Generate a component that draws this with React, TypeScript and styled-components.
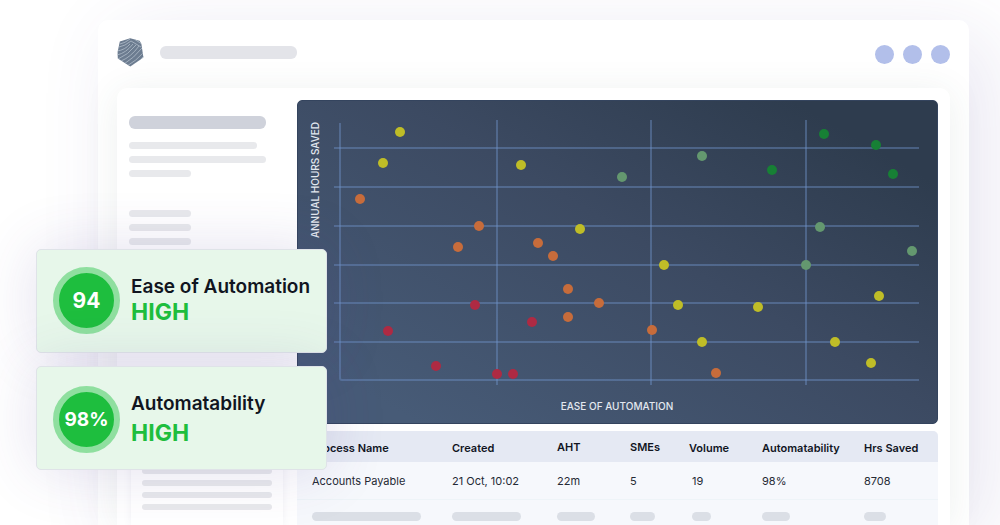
import React from "react";
import styled, { createGlobalStyle } from "styled-components";

const GlobalStyle = createGlobalStyle`
  *, *::before, *::after { box-sizing: border-box; }
  html, body, #root { height: 100%; }
  body {
    margin: 0;
    overflow: hidden;
    background: #ffffff;
    color: #11151f;
    font-family: Inter, "Liberation Sans", sans-serif;
  }
`;

const Page = styled.div`
  position: relative;
  display: flex;
  height: 100%;
  padding: 20px 31px 0 98px;
  overflow: hidden;
`;

const Window = styled.main`
  display: flex;
  flex: 1;
  flex-direction: column;
  min-width: 0;
  padding: 0 19px;
  border-radius: 10px 10px 0 0;
  background: #ffffff;
  box-shadow: 20px 16px 80px rgba(85, 70, 155, 0.13);
`;

const TopBar = styled.header`
  display: flex;
  flex: none;
  align-items: center;
  gap: 16px;
  height: 68px;
  padding-bottom: 4px;
`;

const Dots = styled.div`
  display: flex;
  gap: 9px;
  margin-left: auto;
  padding-top: 4px;
`;

const Dot = styled.span`
  width: 19px;
  height: 19px;
  border-radius: 50%;
  background: #b2bfea;
`;

const Bar = styled.span<{ $w: number; $h?: number; $tone?: string }>`
  display: block;
  flex: none;
  width: ${(p) => p.$w}px;
  max-width: 100%;
  height: ${(p) => p.$h ?? 7}px;
  border-radius: 6px;
  background: ${(p) => p.$tone ?? "#e8e9ec"};
`;

const Panel = styled.section`
  display: flex;
  flex: 1;
  min-height: 0;
  padding: 12px 12px 0;
  border-radius: 10px 10px 0 0;
  background: #ffffff;
  box-shadow: 0 4px 36px rgba(60, 90, 80, 0.09);
`;

const Sidebar = styled.aside`
  display: flex;
  flex: none;
  flex-direction: column;
  width: 168px;
  padding-top: 16px;
`;

const BarGroup = styled.div`
  display: flex;
  flex-direction: column;
  gap: 7px;
  margin-top: 13px;

  & + & { margin-top: 33px; }
`;

const NoteCard = styled.div`
  display: flex;
  flex: none;
  flex-direction: column;
  gap: 6px;
  width: 152px;
  height: 109px;
  margin: auto 0 0 2px;
  padding: 52px 11px 0;
  background: #ffffff;
  box-shadow: 0 0 8px rgba(80, 75, 130, 0.08);
`;

const Content = styled.div`
  display: flex;
  flex: 1;
  flex-direction: column;
  gap: 7px;
  min-width: 0;
`;

const ChartBox = styled.figure`
  flex: none;
  margin: 0;
  overflow: hidden;
  border: 1px solid #34445e;
  border-radius: 5px;
  background: linear-gradient(30deg, #475b77 10%, #3c4a62 55%, #2e3c4e 88%);

  svg { display: block; width: 100%; height: auto; }
`;

const AxisLabel = styled.text`
  fill: #e3e8f0;
  font-size: 10px;
  font-weight: 500;
  text-anchor: middle;
`;

const Table = styled.table`
  width: 100%;
  border-collapse: collapse;
  border-radius: 5px 5px 0 0;
  overflow: hidden;
  table-layout: fixed;
  background: #f6f8fc;
  font-size: 11px;
  line-height: 16px;
  text-align: left;
  white-space: nowrap;

  th {
    height: 31px;
    padding: 3px 0 0 15px;
    background: #e5e9f3;
    font-weight: 600;
  }
  td {
    height: 37px;
    padding: 1px 0 0 15px;
    border-bottom: 1px solid #eef4f8;
    color: #252a35;
  }
  tr:last-child td { height: 33px; }
  td:nth-child(5) { padding-left: 18px; }
  th:nth-child(3), th:nth-child(4) { padding-top: 0; }
`;

const Alerts = styled.div`
  position: absolute;
  top: 249px;
  left: 36px;
  display: flex;
  flex-direction: column;
  gap: 13px;
  width: 291px;
`;

const Alert = styled.article`
  display: flex;
  align-items: center;
  gap: 11px;
  height: 104px;
  padding: 0 16px 2px;
  border: 1px solid #dfe3e8;
  border-radius: 5px;
  background: #e7f7ea;
  box-shadow: 0 0 60px rgba(80, 60, 150, 0.16);

  & + & {
    padding-top: 2px;
    padding-bottom: 0;
  }
`;

const Score = styled.strong<{ $size: number }>`
  display: flex;
  flex: none;
  align-items: center;
  justify-content: center;
  width: 67px;
  height: 67px;
  border: 6px solid #8fdf9f;
  border-radius: 50%;
  background: #1ebe3e;
  color: #ffffff;
  font-size: ${(p) => p.$size}px;
  font-weight: 700;
`;

const AlertTitle = styled.h2`
  margin: 0;
  font-size: 19px;
  font-weight: 600;
  line-height: 24px;
  white-space: nowrap;
`;

const Level = styled.p<{ $gap: number }>`
  margin: ${(p) => p.$gap}px 0 0;
  color: #1ebe3e;
  font-size: 23px;
  font-weight: 700;
  line-height: 26px;
`;

const Logo = () => (
  <svg width="27" height="29" viewBox="0 0 27 29" aria-label="Logo" role="img">
    <defs>
      <clipPath id="gem">
        <path d="M13.2 0.3 22.6 2.8 24.4 6 26.4 19.6 13.3 28.6 0.8 20.6 0.6 14 2.8 3.4Z" />
      </clipPath>
    </defs>
    <g clipPath="url(#gem)">
      <rect width="27" height="29" fill="#6c7c90" />
      <g fill="none" stroke="#a3b0be" strokeWidth="1">
        <path d="M3 6Q8 5 13 1M2 9Q8 8 14 3L24 9M17 1 25 6" />
        <path d="M0 13Q8 12 13 6M0 17Q9 15 16 6M1 21Q11 17 19 7" />
        <path d="M4 23Q14 19 22 8M7 26Q17 20 25 10M10 28Q19 23 27 14M14 29Q22 24 27 18" />
      </g>
    </g>
  </svg>
);

const YELLOW = "#bfbd27";
const ORANGE = "#c76c3b";
const RED = "#ae2a43";
const SAGE = "#64986f";
const GREEN = "#178035";

const points: [number, number, string][] = [
  [103, 32, YELLOW], [86, 63, YELLOW], [224, 65, YELLOW], [283, 129, YELLOW],
  [367, 165, YELLOW], [381, 205, YELLOW], [461, 207, YELLOW], [405, 242, YELLOW],
  [538, 242, YELLOW], [582, 196, YELLOW], [574, 263, YELLOW],
  [63, 99, ORANGE], [182, 126, ORANGE], [161, 147, ORANGE], [241, 143, ORANGE],
  [256, 156, ORANGE], [271, 189, ORANGE], [302, 203, ORANGE], [271, 217, ORANGE],
  [355, 230, ORANGE], [419, 273, ORANGE],
  [178, 205, RED], [91, 231, RED], [235, 222, RED], [139, 266, RED],
  [200, 274, RED], [216, 274, RED],
  [325, 77, SAGE], [405, 56, SAGE], [523, 127, SAGE], [615, 151, SAGE], [509, 165, SAGE],
  [527, 34, GREEN], [579, 45, GREEN], [475, 70, GREEN], [596, 74, GREEN],
];

const Chart = () => (
  <ChartBox>
    <svg viewBox="1 1 639 322" role="img" aria-label="Annual hours saved by ease of automation">
      <g fill="none" stroke="#6f94cb" strokeOpacity="0.42" strokeWidth="2">
        {[48, 87, 126, 165, 203, 242].map((y) => (
          <path key={y} d={`M37 ${y}H622`} />
        ))}
        <path d="M43 23V278Q43 280 45 280H622" />
        {[200, 354, 509].map((x) => (
          <path key={x} d={`M${x} 20V285`} />
        ))}
      </g>
      {points.map(([x, y, fill]) => (
        <circle key={`${x}-${y}`} cx={x} cy={y} r="5" fill={fill} />
      ))}
      <AxisLabel x="320" y="310">EASE OF AUTOMATION</AxisLabel>
      <AxisLabel transform="translate(22 80) rotate(-90)">ANNUAL HOURS SAVED</AxisLabel>
    </svg>
  </ChartBox>
);

const columns = [
  { name: "Process Name", value: "Accounts Payable", width: 140, bar: 109 },
  { name: "Created", value: "21 Oct, 10:02", width: 105, bar: 69 },
  { name: "AHT", value: "22m", width: 73, bar: 38 },
  { name: "SMEs", value: "5", width: 59, bar: 25 },
  { name: "Volume", value: "19", width: 73, bar: 19 },
  { name: "Automatability", value: "98%", width: 102, bar: 28 },
  { name: "Hrs Saved", value: "8708", width: 89, bar: 22 },
];

const alerts = [
  { score: "94", size: 21, title: "Ease of Automation", level: "HIGH", gap: 0 },
  { score: "98%", size: 19, title: "Automatability", level: "HIGH", gap: 4 },
];

export default function App() {
  return (
    <>
      <GlobalStyle />
      <Page>
        <Window>
          <TopBar>
            <Logo />
            <Bar $w={137} $h={13} $tone="#e3e4e9" />
            <Dots>
              <Dot />
              <Dot />
              <Dot />
            </Dots>
          </TopBar>
          <Panel>
            <Sidebar>
              <Bar $w={137} $h={13} $tone="#cfd2db" />
              <BarGroup>
                <Bar $w={128} />
                <Bar $w={137} />
                <Bar $w={62} />
              </BarGroup>
              <BarGroup>
                <Bar $w={62} />
                <Bar $w={62} />
                <Bar $w={62} />
              </BarGroup>
              <NoteCard>
                <Bar $w={130} $h={6} />
                <Bar $w={130} $h={6} />
                <Bar $w={130} $h={6} />
                <Bar $w={130} $h={6} />
              </NoteCard>
            </Sidebar>
            <Content>
              <Chart />
              <Table>
                <colgroup>
                  {columns.map((c) => (
                    <col key={c.name} width={c.width} />
                  ))}
                </colgroup>
                <thead>
                  <tr>
                    {columns.map((c) => (
                      <th key={c.name} scope="col">{c.name}</th>
                    ))}
                  </tr>
                </thead>
                <tbody>
                  <tr>
                    {columns.map((c) => (
                      <td key={c.name}>{c.value}</td>
                    ))}
                  </tr>
                  <tr>
                    {columns.map((c) => (
                      <td key={c.name}>
                        <Bar $w={c.bar} $h={9} $tone="#dbdfe6" />
                      </td>
                    ))}
                  </tr>
                </tbody>
              </Table>
            </Content>
          </Panel>
        </Window>
        <Alerts>
          {alerts.map((a) => (
            <Alert key={a.title}>
              <Score $size={a.size}>{a.score}</Score>
              <div>
                <AlertTitle>{a.title}</AlertTitle>
                <Level $gap={a.gap}>{a.level}</Level>
              </div>
            </Alert>
          ))}
        </Alerts>
      </Page>
    </>
  );
}
